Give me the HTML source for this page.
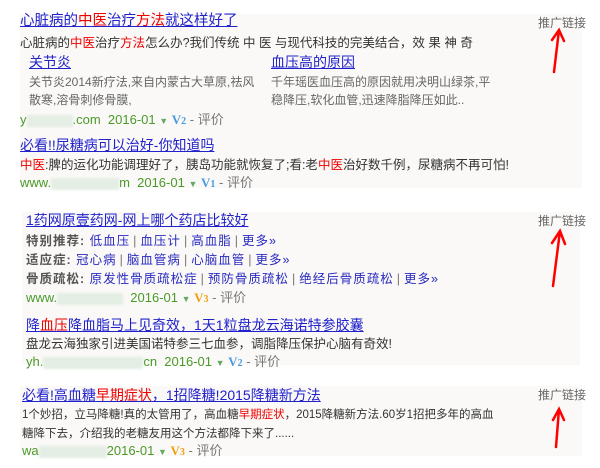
<!DOCTYPE html>
<html><head><meta charset="utf-8"><style>
*{margin:0;padding:0}
body{width:600px;height:468px;background:#fff;position:relative;overflow:hidden;font-family:"Liberation Sans","Noto Sans CJK SC",sans-serif;}
.p{position:absolute;background:#faf9f7}
.t{position:absolute;white-space:nowrap;font-size:14px;color:#2222cc;text-decoration:underline;line-height:18px}
.d{position:absolute;white-space:nowrap;font-size:12.5px;color:#333;line-height:16px}
.g{color:#666}
.r{color:#e00}
.u{position:absolute;white-space:nowrap;font-size:13px;color:#4a9a2a;line-height:16px}
.u .b{display:inline-block;height:12px;background:#e4eee4;vertical-align:middle;filter:blur(1px)}
.v{color:#4a9ae0;font-weight:bold;font-family:"Liberation Serif",serif}
.v3{color:#f0a010;font-weight:bold;font-family:"Liberation Serif",serif}
.tri{color:#6a6;font-size:9px}
.e{color:#777}
.ad{position:absolute;font-size:12px;color:#666;white-space:nowrap}
.l{color:#2a2ac0}
.k{color:#555;font-weight:bold}
.s{letter-spacing:1px}
.s .e{margin:0 3px}
</style></head><body>
<div class="p" style="left:20px;top:14px;width:562px;height:174px"></div>
<div class="p" style="left:22px;top:212px;width:558px;height:153px"></div>
<div class="p" style="left:20px;top:386px;width:562px;height:70px"></div>

<div class="t" style="left:20px;top:12px;font-size:14.5px">心脏病的<span class="r">中医</span>治疗<span class="r">方法</span>就这样好了</div>
<div class="d" style="left:20px;top:35px">心脏病的<span class="r">中医</span>治疗<span class="r">方法</span>怎么办?我们传统 中 医 与现代科技的完美结合，效 果 神 奇</div>
<div class="t" style="left:29px;top:53px">关节炎</div>
<div class="t" style="left:271px;top:53px">血压高的原因</div>
<div class="d g" style="left:29px;top:74px;font-size:12px">关节炎2014新疗法,来自内蒙古大草原,祛风</div>
<div class="d g" style="left:29px;top:92px;font-size:12px">散寒,溶骨刺修骨膜,</div>
<div class="d g" style="left:271px;top:74px;font-size:12px">千年瑶医血压高的原因就用决明山绿茶,平</div>
<div class="d g" style="left:271px;top:92px;font-size:12px">稳降压,软化血管,迅速降脂降压如此..</div>
<div class="u" style="left:20px;top:112px">y<span class="b" style="width:46px"></span>.com &nbsp;2016-01 <span class="tri">▼</span> <span class="v">V</span><span class="v" style="font-size:10px">2</span> <span class="e">- 评价</span></div>
<div class="t" style="left:20px;top:136px">必看!!尿糖病可以治好-你知道吗</div>
<div class="d" style="left:20px;top:157px"><span class="r">中医</span>:脾的运化功能调理好了，胰岛功能就恢复了;看:老<span class="r">中医</span>治好数千例，尿糖病不再可怕!</div>
<div class="u" style="left:20px;top:175px">www.<span class="b" style="width:68px"></span>m &nbsp;2016-01 <span class="tri">▼</span> <span class="v">V</span><span class="v" style="font-size:10px">1</span> <span class="e">- 评价</span></div>
<div class="ad" style="left:538px;top:14px">推广链接</div>

<div class="t" style="left:26px;top:211px">1药网原壹药网-网上哪个药店比较好</div>
<div class="d s" style="left:26px;top:233px"><span class="k">特别推荐:</span> <span class="l">低血压</span><span class="e">|</span><span class="l">血压计</span><span class="e">|</span><span class="l">高血脂</span><span class="e">|</span><span class="l">更多»</span></div>
<div class="d s" style="left:26px;top:252px"><span class="k">适应症:</span> <span class="l">冠心病</span><span class="e">|</span><span class="l">脑血管病</span><span class="e">|</span><span class="l">心脑血管</span><span class="e">|</span><span class="l">更多»</span></div>
<div class="d s" style="left:26px;top:271px"><span class="k">骨质疏松:</span> <span class="l">原发性骨质疏松症</span><span class="e">|</span><span class="l">预防骨质疏松</span><span class="e">|</span><span class="l">绝经后骨质疏松</span><span class="e">|</span><span class="l">更多»</span></div>
<div class="u" style="left:26px;top:290px">www.<span class="b" style="width:66px"></span> &nbsp;2016-01 <span class="tri">▼</span> <span class="v3">V</span><span class="v3" style="font-size:10px">3</span> <span class="e">- 评价</span></div>
<div class="t" style="left:26px;top:316px">降<span class="r">血压</span>降血脂马上见奇效，1天1粒盘龙云海诺特参胶囊</div>
<div class="d" style="left:26px;top:336px">盘龙云海独家引进美国诺特参三七血参，调脂降压保护心脑有奇效!</div>
<div class="u" style="left:26px;top:354px">yh.<span class="b" style="width:100px"></span>cn &nbsp;2016-01 <span class="tri">▼</span> <span class="v">V</span><span class="v" style="font-size:10px">2</span> <span class="e">- 评价</span></div>
<div class="ad" style="left:538px;top:212px">推广链接</div>

<div class="t" style="left:22px;top:386px">必看!高血糖<span class="r">早期症状</span>，1招降糖!2015降糖新方法</div>
<div class="d" style="left:22px;top:407px;font-size:11.5px">1个妙招，立马降糖!真的太管用了，高血糖<span class="r">早期症状</span>，2015降糖新方法.60岁1招把多年的高血</div>
<div class="d" style="left:22px;top:426px;font-size:11.5px">糖降下去，介绍我的老糖友用这个方法都降下来了......</div>
<div class="u" style="left:22px;top:443px">wa<span class="b" style="width:68px"></span>2016-01 <span class="tri">▼</span> <span class="v3">V</span><span class="v3" style="font-size:10px">3</span> <span class="e">- 评价</span></div>
<div class="ad" style="left:538px;top:386px">推广链接</div>

<svg style="position:absolute;left:0;top:0" width="600" height="468">
<g stroke="#f00" stroke-width="2.5" fill="none" stroke-linecap="round">
<path d="M554 72 L559 30 M552 40 L559 30 L564 41"/>
<path d="M553 286 L560 231 M552 243 L560 231 L565 244"/>
<path d="M556 447 L559 409 M553 420 L559 409 L564 420"/>
</g></svg>
</body></html>
